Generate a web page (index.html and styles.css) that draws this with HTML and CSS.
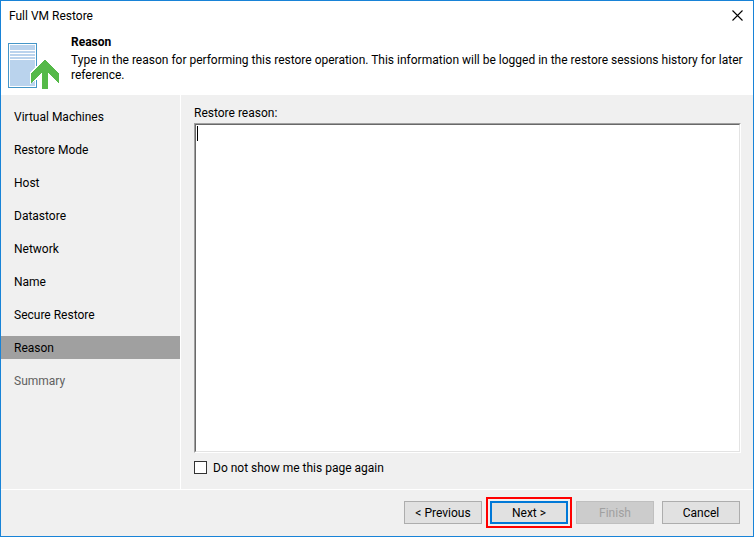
FILE: index.html
```html
<!DOCTYPE html>
<html lang="en">
<head>
<meta charset="utf-8">
<title>Full VM Restore</title>
<link rel="stylesheet" href="styles.css">
</head>
<body>
<div class="window">
  <div class="titlebar">
    <span class="title">Full VM Restore</span>
    <button class="close" type="button" aria-label="Close">
      <svg width="11" height="11" viewBox="0 0 11 11"><path d="M.5.5l10 10M10.500.5l-10 10" fill="none" stroke="#000" stroke-width="1.1"/></svg>
    </button>
  </div>
  <header class="header">
    <svg class="icon" width="52" height="47" viewBox="0 0 52 47" shape-rendering="crispEdges">
      <rect x=".5" y=".5" width="28" height="44" fill="#fff" stroke="#4596c8"/>
      <path fill="#bad3ed" d="M2 2h25v5H2zM2 8h25v2H2zM2 11h25v2H2zM2 14h25v2H2zM2 17h25v26H2z"/>
      <path fill="#fff" d="M22 29L37 15v16L22 41z"/>
      <path fill="#55b948" d="M37 17L51 30v10L40 30v16h-6V30L23 40V30z"/>
    </svg>
    <div>
      <h1 class="heading">Reason</h1>
      <p class="description">Type in the reason for performing this restore operation. This information will be logged in the restore sessions history for later reference.</p>
    </div>
  </header>
  <div class="body">
    <nav class="steps">
      <a href="#">Virtual Machines</a>
      <a href="#">Restore Mode</a>
      <a href="#">Host</a>
      <a href="#">Datastore</a>
      <a href="#">Network</a>
      <a href="#">Name</a>
      <a href="#">Secure Restore</a>
      <a href="#" class="current" aria-current="step">Reason</a>
      <a href="#" class="pending">Summary</a>
    </nav>
    <main class="content">
      <label for="reason">Restore reason:</label>
      <div class="field">
        <textarea id="reason"></textarea>
      </div>
      <div class="check">
        <input type="checkbox" id="skip">
        <label for="skip">Do not show me this page again</label>
      </div>
    </main>
  </div>
  <footer class="footer">
    <button class="btn" type="button">&lt; Previous</button>
    <button class="btn primary" type="button">Next &gt;</button>
    <button class="btn" type="button" disabled>Finish</button>
    <button class="btn" type="button">Cancel</button>
  </footer>
</div>
</body>
</html>
```
FILE: styles.css
```css
* {
  box-sizing: border-box;
}

body {
  margin: 0;
  color: #000;
  font: 12px/15px Roboto, "Open Sans", sans-serif;
}

.window {
  display: flex;
  flex-direction: column;
  min-height: 100vh;
  border: 1px solid #1883d7;
  background: #f0f0f0;
}

.titlebar {
  display: flex;
  align-items: center;
  justify-content: space-between;
  height: 29px;
  padding: 0 8px;
  background: #fff;
}

.title {
  padding-top: 2px;
}

.close {
  display: flex;
  padding: 2px;
  border: 0;
  background: none;
}

.header {
  display: flex;
  gap: 11px;
  padding: 5px 8px 5px 7px;
  background: #fff;
}

.icon {
  flex: none;
  margin-top: 8px;
}

.heading {
  margin: 0 0 3px;
  font-size: 12px;
  line-height: 15px;
}

.description {
  margin: 0;
}

.body {
  display: flex;
  flex: 1;
}

.steps {
  display: flex;
  flex-direction: column;
  gap: 10px;
  width: 180px;
  padding-top: 10px;
  border-right: 1px solid #fff;
}

.steps a {
  padding: 5px 13px 3px;
  color: #000;
  text-decoration: none;
}

.steps .current {
  background: #a0a0a0;
}

.steps .pending {
  color: #606060;
}

.content {
  display: flex;
  flex: 1;
  flex-direction: column;
  padding: 11px 12px 13px 13px;
}

.field {
  position: relative;
  display: flex;
  flex: 1;
  margin: 2px 0 6px;
  border: 1px solid;
  border-color: #a0a0a0 #fff #fff #a0a0a0;
}

.field::before {
  position: absolute;
  top: 2px;
  left: 2px;
  width: 1px;
  height: 15px;
  background: #000;
  content: "";
}

textarea {
  flex: 1;
  border: 1px solid;
  border-color: #696969 #e3e3e3 #e3e3e3 #696969;
  outline: 0;
  background: #fff;
  font: inherit;
  resize: none;
}

.check {
  display: flex;
  align-items: center;
  gap: 6px;
}

.check label {
  padding-top: 2px;
}

.check input {
  width: 13px;
  height: 13px;
  margin: 0;
  border: 1px solid #333;
  background: #fff;
  appearance: none;
}

.footer {
  display: flex;
  justify-content: flex-end;
  gap: 8px;
  padding: 11px 13px 12px;
  border-top: 1px solid #fff;
}

.btn {
  width: 78px;
  height: 23px;
  padding: 2px 0 0;
  border: 1px solid #adadad;
  background: #e1e1e1;
  color: #000;
  font: inherit;
}

.btn:disabled {
  border-color: #bfbfbf;
  background: #ccc;
  color: #a0a0a0;
}

.primary {
  border: 2px solid #0078d7;
  outline: 2px solid #f00;
  outline-offset: 2px;
}
```
